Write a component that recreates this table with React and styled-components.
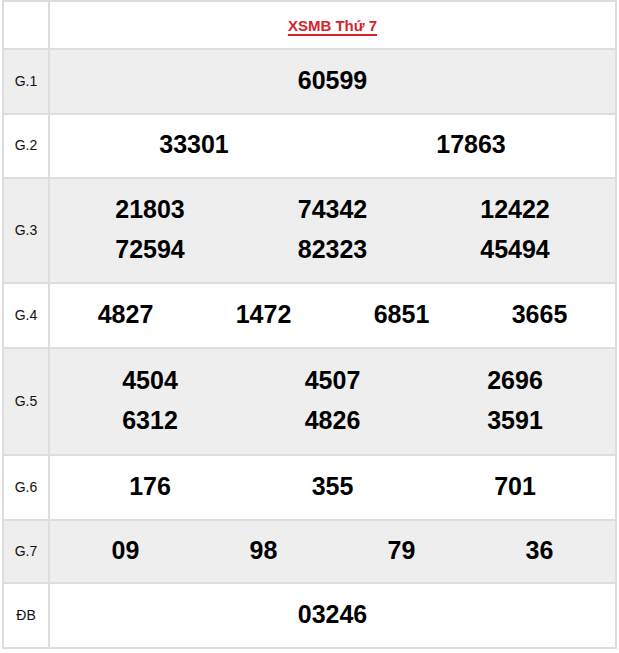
import React from 'react';
import styled, { createGlobalStyle } from 'styled-components';

const Global = createGlobalStyle`
  html, body { margin: 0; padding: 0; background: #ffffff; }
  body { font-family: "Liberation Sans", Arial, sans-serif; }
`;

const Table = styled.div`
  margin-left: 2px;
  width: 615px;
  box-sizing: border-box;
  border: 1px solid #dddddd;
  display: flex;
  flex-direction: column;
`;

const Row = styled.div`
  display: flex;
  height: ${(p) => p.$h}px;
  background: ${(p) => (p.$shaded ? '#eeeeee' : '#ffffff')};
`;

const Label = styled.div`
  width: 46px;
  flex: none;
  box-sizing: border-box;
  border: 1px solid #dddddd;
  display: flex;
  align-items: center;
  justify-content: center;
  padding-bottom: 2px;
  font-size: 14px;
  color: #111111;
`;

const Content = styled.div`
  flex: 1;
  box-sizing: border-box;
  border: 1px solid #dddddd;
  padding-bottom: 4px;
  display: grid;
  grid-template-columns: repeat(${(p) => p.$cols}, ${(p) => p.$w}px);
  justify-content: center;
  align-content: center;
  font-size: 25px;
  font-weight: bold;
  line-height: 40px;
  text-align: center;
  color: #000000;
`;

const TitleCell = styled.div`
  flex: 1;
  box-sizing: border-box;
  border: 1px solid #dddddd;
  display: flex;
  align-items: center;
  justify-content: center;
`;

const Title = styled.a`
  font-size: 15px;
  font-weight: bold;
  color: #d8232a;
  text-decoration: underline;
  text-decoration-thickness: 2px;
  text-underline-offset: 3px;
  cursor: pointer;
`;

const widths = { 1: 565, 2: 277, 3: 182.5, 4: 138 };

const rows = [
  { label: 'G.1', h: 65, cols: 1, nums: ['60599'] },
  { label: 'G.2', h: 64, cols: 2, nums: ['33301', '17863'] },
  { label: 'G.3', h: 105, cols: 3, nums: ['21803', '74342', '12422', '72594', '82323', '45494'] },
  { label: 'G.4', h: 65, cols: 4, nums: ['4827', '1472', '6851', '3665'] },
  { label: 'G.5', h: 107, cols: 3, nums: ['4504', '4507', '2696', '6312', '4826', '3591'] },
  { label: 'G.6', h: 65, cols: 3, nums: ['176', '355', '701'] },
  { label: 'G.7', h: 63, cols: 4, nums: ['09', '98', '79', '36'] },
  { label: 'ĐB', h: 65, cols: 1, nums: ['03246'] },
];

export default function App() {
  return (
    <>
      <Global />
      <Table>
        <Row $h={48}>
          <Label />
          <TitleCell>
            <Title>XSMB Thứ 7</Title>
          </TitleCell>
        </Row>
        {rows.map((r, i) => (
          <Row key={r.label} $h={r.h} $shaded={i % 2 === 0}>
            <Label>{r.label}</Label>
            <Content $cols={r.cols} $w={widths[r.cols]}>
              {r.nums.map((n, j) => (
                <span key={j}>{n}</span>
              ))}
            </Content>
          </Row>
        ))}
      </Table>
    </>
  );
}
